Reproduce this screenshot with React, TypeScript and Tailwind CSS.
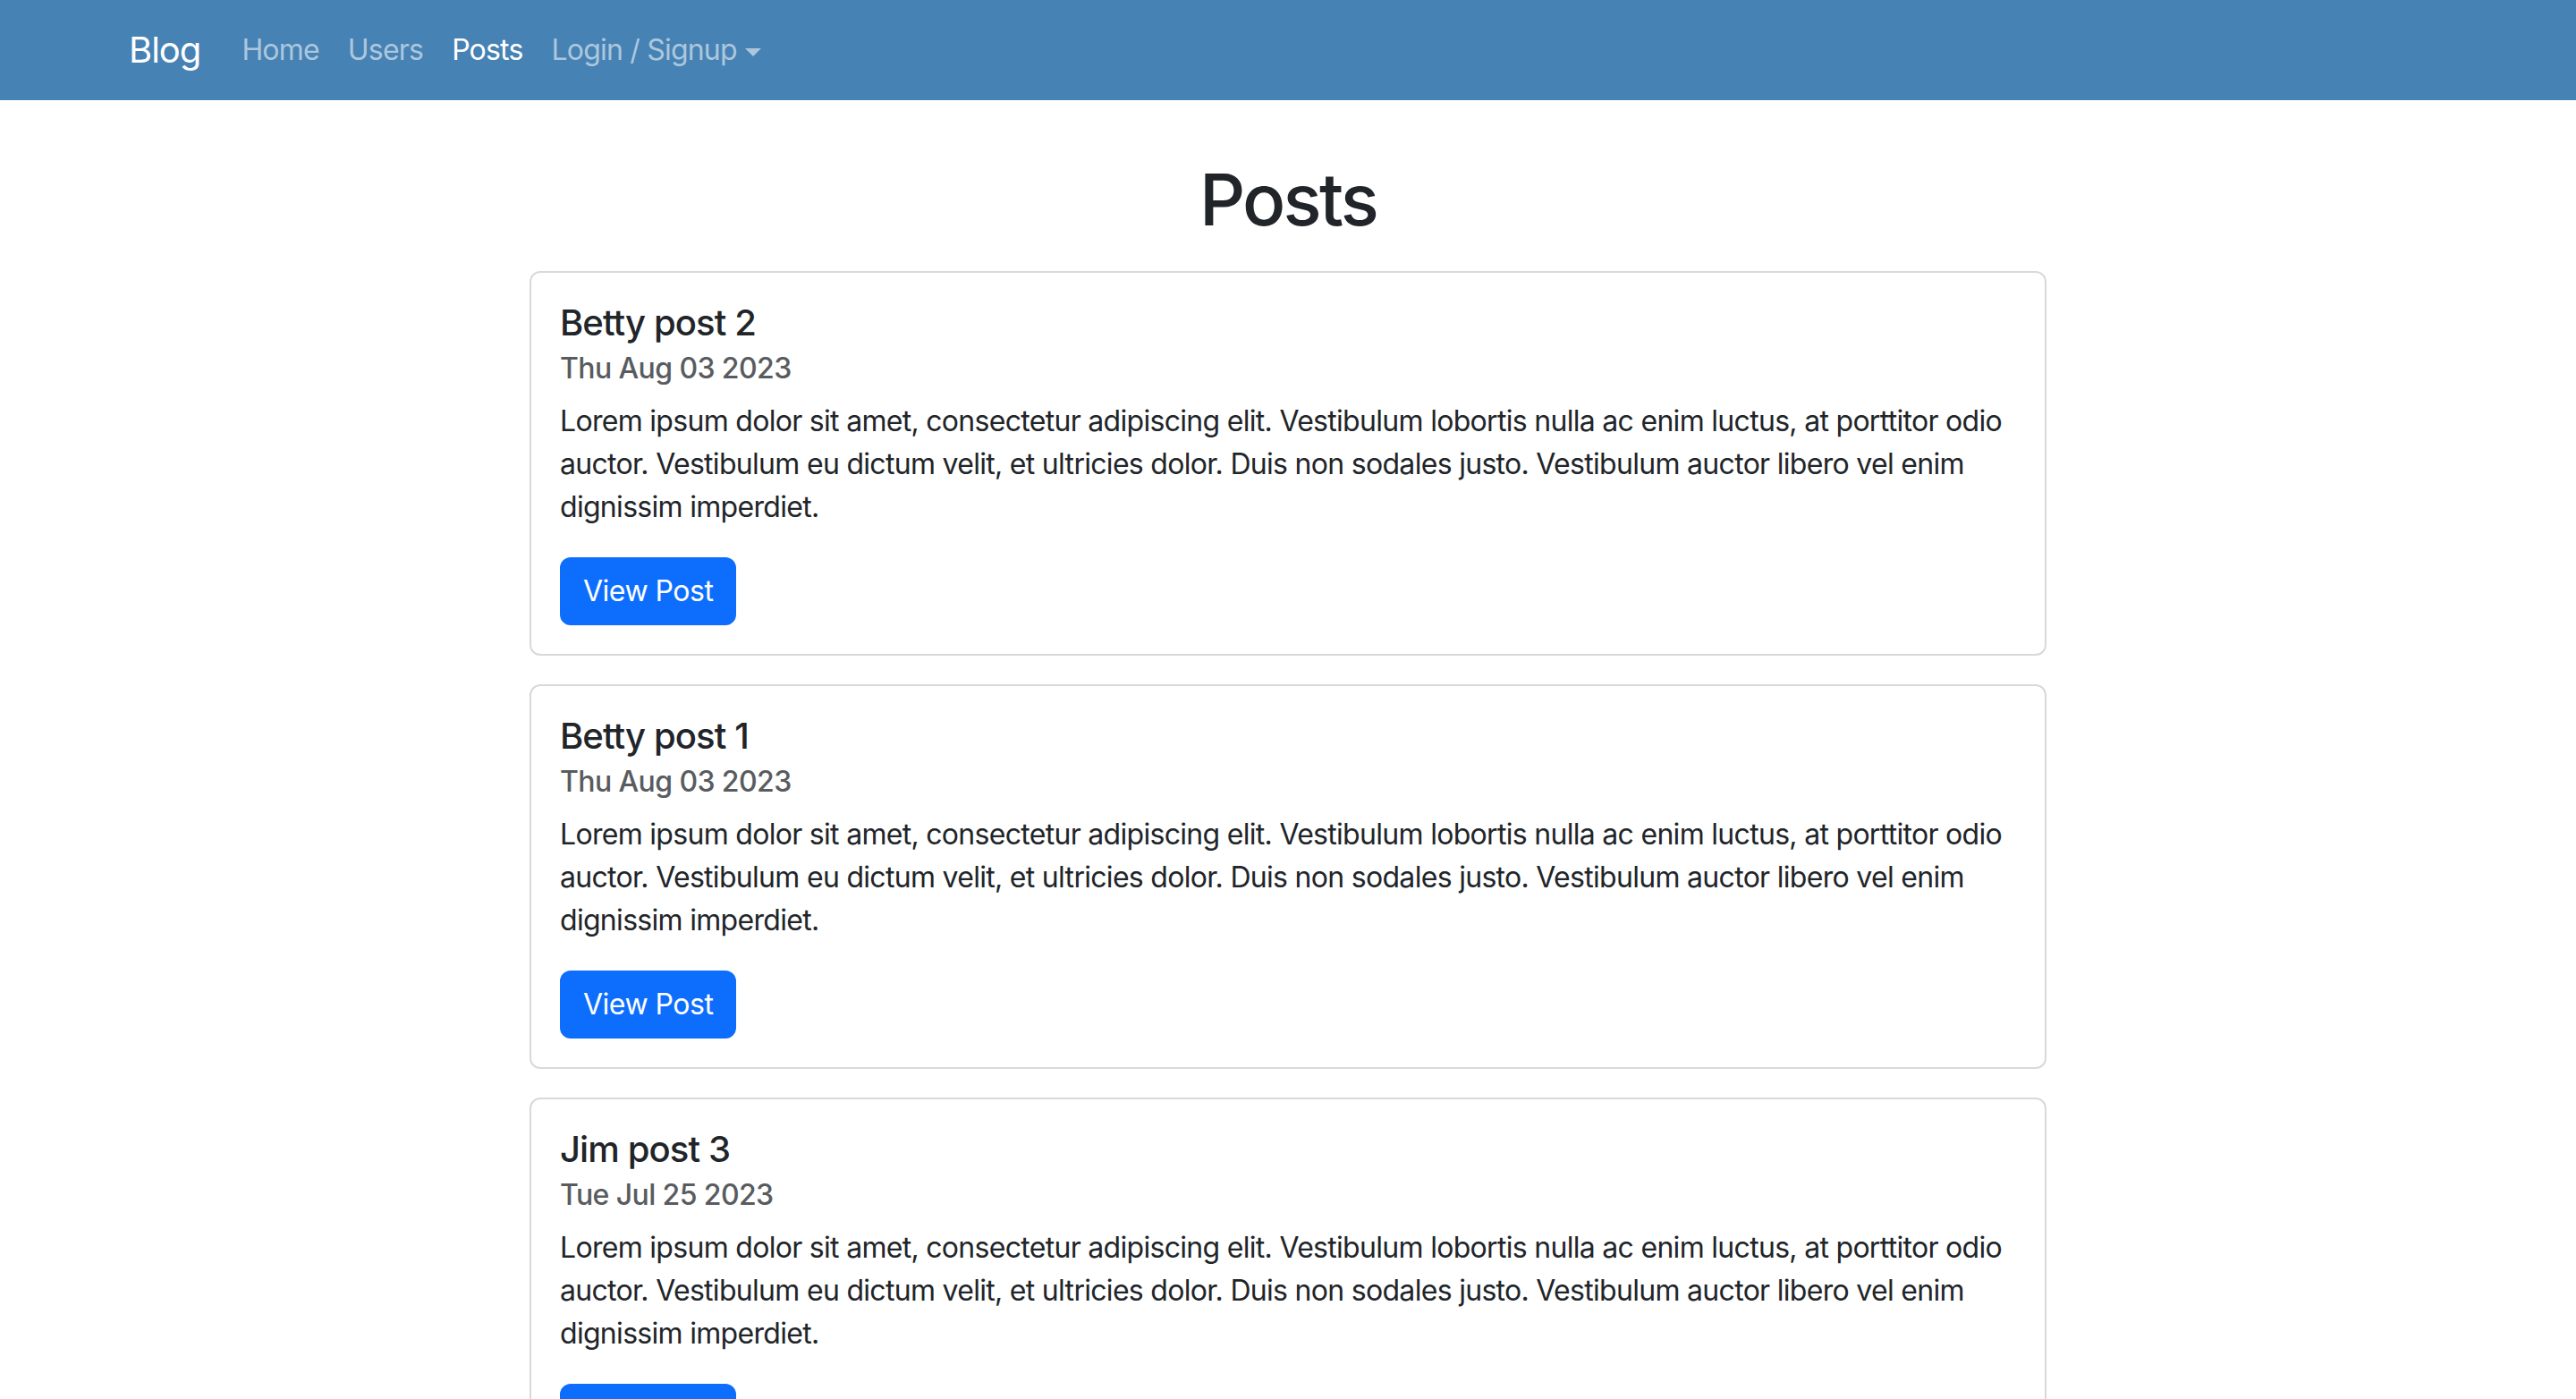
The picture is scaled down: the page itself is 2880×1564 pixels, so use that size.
import React from "react";

const lorem =
  "Lorem ipsum dolor sit amet, consectetur adipiscing elit. Vestibulum lobortis nulla ac enim luctus, at porttitor odio auctor. Vestibulum eu dictum velit, et ultricies dolor. Duis non sodales justo. Vestibulum auctor libero vel enim dignissim imperdiet.";

const posts = [
  { title: "Betty post 2", date: "Thu Aug 03 2023" },
  { title: "Betty post 1", date: "Thu Aug 03 2023" },
  { title: "Jim post 3", date: "Tue Jul 25 2023" },
];

export default function App() {
  return (
    <div className="min-h-screen bg-white text-[#212529] font-['Inter',sans-serif]">
      <nav className="bg-[#4682b4] h-[112px]">
        <div className="max-w-[2640px] mx-auto px-[24px] h-full flex items-center">
          <a className="text-white text-[40px] leading-[60px] mr-[30px] tracking-[-1px]">Blog</a>
          <div className="flex items-center text-[32px] leading-[48px] tracking-[-0.8px]">
            <a className="px-[16px] text-[#acc7dd]">Home</a>
            <a className="px-[16px] text-[#acc7dd]">Users</a>
            <a className="px-[16px] text-white">Posts</a>
            <a className="px-[16px] text-[#acc7dd] flex items-center">
              Login / Signup
              <span className="ml-[9px] mt-[4px] inline-block w-0 h-0 border-t-[9px] border-t-[#acc7dd] border-l-[9px] border-l-transparent border-r-[9px] border-r-transparent" />
            </a>
          </div>
        </div>
      </nav>
      <main className="w-[1696px] mx-auto">
        <h1 className="text-center text-[80px] leading-[96px] font-medium mt-[63px] mb-[32px] tracking-[-2.8px]">Posts</h1>
        {posts.map((p) => (
          <div key={p.title} className="border-2 border-[#d9d9d9] rounded-[12px] p-[32px] mb-[32px]">
            <h5 className="text-[40px] leading-[48px] font-medium mb-[8px] tracking-[-0.9px]">{p.title}</h5>
            <h6 className="text-[32px] leading-[38px] font-medium text-[#595c5f] mb-[16px] tracking-[-0.6px]">{p.date}</h6>
            <p className="text-[32px] leading-[48px] mb-[32px] tracking-[-0.7px]">{lorem}</p>
            <button className="bg-[#0d6efd] border-2 border-[#0d6efd] text-white text-[32px] leading-[48px] px-[24px] py-[12px] rounded-[12px] tracking-[-0.5px]">
              View Post
            </button>
          </div>
        ))}
      </main>
    </div>
  );
}
